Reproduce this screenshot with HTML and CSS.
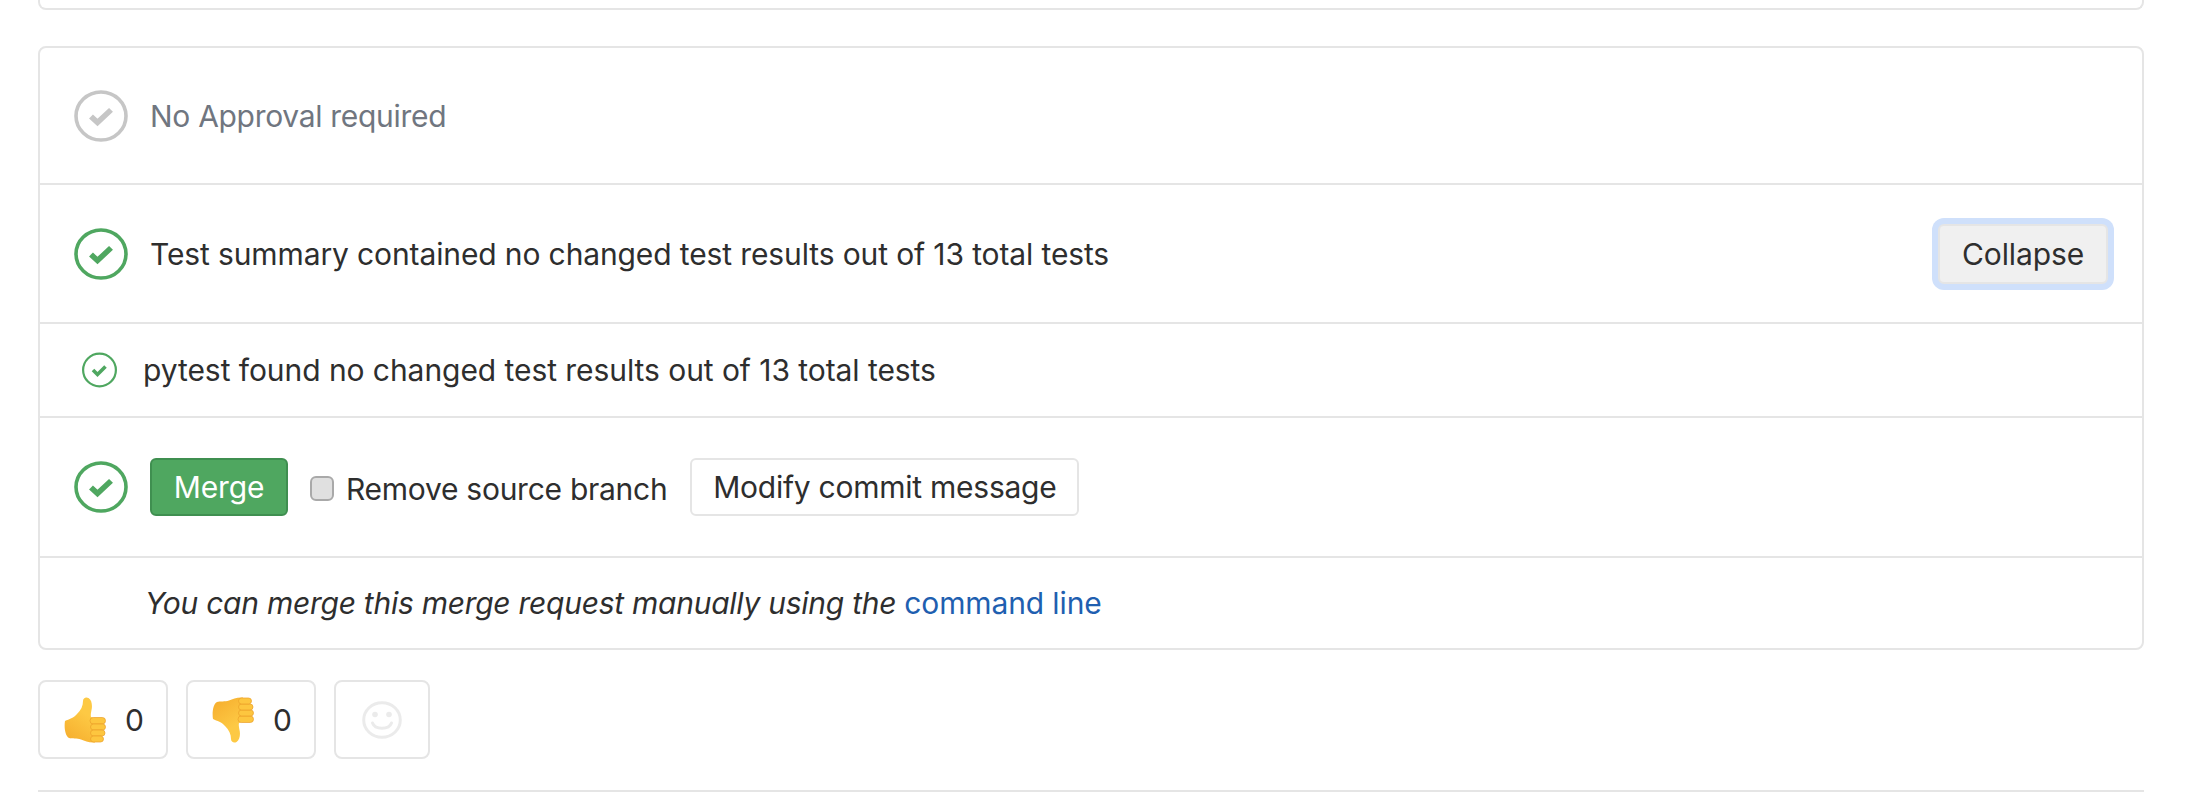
FILE: index.html
```html
<!DOCTYPE html>
<html lang="en">
<head>
    <meta charset="UTF-8">
    <title>Merge request</title>
    <link rel="stylesheet" href="styles.css">
</head>
<body>
    <svg class="defs" width="0" height="0">
        <defs>
            <linearGradient id="thumb-fill" x1="0.7" y1="0" x2="0.2" y2="1">
                <stop offset="0.3" stop-color="#fdc944"/>
                <stop offset="1" stop-color="#f6ae2e"/>
            </linearGradient>
        </defs>
        <symbol id="status-ok" viewBox="0 0 54 54" preserveAspectRatio="none">
            <circle cx="27" cy="27" r="25" fill="none" stroke="currentColor" stroke-width="3.6"/>
            <path d="M17 27.500 L23.500 33.800 L37 20.600" fill="none" stroke="currentColor" stroke-width="5.600"/>
        </symbol>
        <symbol id="status-ok-small" viewBox="0 0 35 36" preserveAspectRatio="none">
            <circle cx="17.500" cy="18" r="16.400" fill="none" stroke="currentColor" stroke-width="2.200"/>
            <path d="M11 18 L15.500 22.500 L23.500 14.500" fill="none" stroke="currentColor" stroke-width="3.600"/>
        </symbol>
        <symbol id="thumb" viewBox="0 0 42 46">
            <path fill="url(#thumb-fill)" d="M1 24 C5 22 10 21 13 17 C17 13 19 9 19 4 C19 1 22 -0.500 24.500 1 C28 3 28.500 9 27.500 13 C27 16 26.500 18 27 20 L32 22 L31 45.500 C25 46 21 44 17 42.500 C13 41 8 42 5 41 C1 39 0 30 1 24 Z"/>
            <rect class="finger" x="26" y="20.500" width="15.500" height="6.500" rx="3.200"/>
            <rect class="finger" x="26.500" y="27" width="15" height="6" rx="3"/>
            <rect class="finger" x="26.500" y="33" width="14.500" height="6" rx="3"/>
            <rect class="finger" x="26.500" y="39" width="13" height="6" rx="3"/>
        </symbol>
    </svg>

    <div class="card card-prev"></div>

    <!-- Merge widget -->
    <section class="card widget">
        <div class="row row-approval">
            <svg class="status status-muted"><use href="#status-ok"/></svg>
            <span class="muted">No Approval required</span>
        </div>
        <div class="row row-tests">
            <svg class="status status-ok"><use href="#status-ok"/></svg>
            <span>Test summary contained no changed test results out of 13 total tests</span>
            <button class="btn btn-focus" type="button">Collapse</button>
        </div>
        <div class="row row-report">
            <svg class="status-small status-ok"><use href="#status-ok-small"/></svg>
            <span>pytest found no changed test results out of 13 total tests</span>
        </div>
        <div class="row row-merge">
            <svg class="status status-ok"><use href="#status-ok"/></svg>
            <button class="btn btn-merge" type="button">Merge</button>
            <label class="remove-branch">
                <input type="checkbox">
                <span>Remove source branch</span>
            </label>
            <button class="btn btn-modify" type="button">Modify commit message</button>
        </div>
        <div class="row row-hint">
            <em>You can merge this merge request manually using the</em>
            <a href="#">command line</a>
        </div>
    </section>

    <!-- Award emoji -->
    <div class="awards">
        <button class="award award-count" type="button">
            <svg class="emoji"><use href="#thumb"/></svg>
            <span>0</span>
        </button>
        <button class="award award-count" type="button">
            <svg class="emoji emoji-down"><use href="#thumb"/></svg>
            <span>0</span>
        </button>
        <button class="award award-add" type="button" aria-label="Add reaction">
            <svg class="smiley" viewBox="0 0 40 38">
                <ellipse cx="20" cy="19" rx="18.300" ry="17.300" fill="none" stroke="#ebebeb" stroke-width="3"/>
                <circle cx="13" cy="13.500" r="2.800" fill="#ebebeb"/>
                <circle cx="27" cy="13.500" r="2.800" fill="#ebebeb"/>
                <path d="M10.500 22 C13 29 27 29 29.500 22" fill="none" stroke="#ebebeb" stroke-width="3" stroke-linecap="round"/>
            </svg>
        </button>
    </div>

    <div class="rule"></div>
</body>
</html>
```

FILE: styles.css
```css
body {
    margin: 0;
    padding: 0 58px 0 38px;
    color: #2e2e2e;
    background-color: #ffffff;
    font-family: Inter, "Noto Sans", sans-serif;
    font-size: 30px;
    letter-spacing: -0.12px;
}

.defs {
    display: block;
}

.finger {
    fill: #fdc63f;
    stroke: #eb9f2a;
    stroke-width: 0.7;
}

/* Cards */
.card {
    border: 2px solid #e5e5e5;
    border-radius: 8px;
}

.card-prev {
    height: 8px;
    border-top: 0;
    border-top-left-radius: 0;
    border-top-right-radius: 0;
    margin-bottom: 36px;
}

/* Widget rows */
.row {
    display: flex;
    align-items: center;
    box-sizing: border-box;
    border-bottom: 2px solid #e5e5e5;
    padding: 0 34px;
}

.row:last-child {
    border-bottom: 0;
}

.row-approval { height: 137px; }
.row-tests { height: 139px; }
.row-report { height: 94px; padding-left: 42px; letter-spacing: -0.06px; }
.row-merge { height: 140px; }
.row-hint { height: 90px; padding-left: 105px; }

.row-hint em {
    letter-spacing: -0.26px;
}

.status {
    width: 54px;
    height: 52px;
    margin-right: 22px;
    flex: none;
}

.status-small {
    width: 35px;
    height: 36px;
    margin-right: 26px;
    flex: none;
}

.status-ok { color: #4fa760; }
.status-muted { color: #c6c6c6; }

.muted {
    color: #707680;
    letter-spacing: -0.3px;
}

/* Buttons */
.btn {
    box-sizing: border-box;
    height: 58px;
    border: 2px solid #e5e5e5;
    border-radius: 6px;
    background: #ffffff;
    color: #2e2e2e;
    font: inherit;
    letter-spacing: inherit;
    padding: 0;
}

.btn-focus {
    width: 170px;
    height: 60px;
    margin-left: auto;
    background: #f0f0f0;
    box-shadow: 0 0 0 6px #cfe0fb;
}

.btn-merge {
    width: 138px;
    background: #4fa760;
    border-color: #3f8f50;
    color: #ffffff;
}

.btn-modify {
    width: 389px;
    margin-left: 23px;
    letter-spacing: -0.25px;
}

.remove-branch {
    display: flex;
    align-items: center;
    gap: 12px;
    margin: 3px 0 0 22px;
    letter-spacing: -0.27px;
}

.remove-branch input {
    appearance: none;
    width: 24px;
    height: 25px;
    margin: 0;
    border: 2px solid #a9a9a9;
    border-radius: 6px;
    background: #e0e0e0;
}

.row-hint a {
    margin-left: 8px;
    color: #1f5fb0;
    text-decoration: none;
}

/* Awards */
.awards {
    display: flex;
    gap: 18px;
    margin-top: 30px;
}

.award {
    box-sizing: border-box;
    display: flex;
    align-items: center;
    height: 79px;
    border: 2px solid #e5e5e5;
    border-radius: 8px;
    background: #ffffff;
    color: #2e2e2e;
    font: inherit;
    padding: 0;
}

.award-count {
    width: 130px;
    gap: 19px;
    padding-left: 24px;
}

.award-add {
    width: 96px;
    justify-content: center;
}

.emoji {
    width: 42px;
    height: 46px;
}

.emoji-down {
    transform: scaleY(-1);
}

.smiley {
    width: 40px;
    height: 38px;
}

.rule {
    height: 2px;
    margin-top: 31px;
    background: #e5e5e5;
}
```
